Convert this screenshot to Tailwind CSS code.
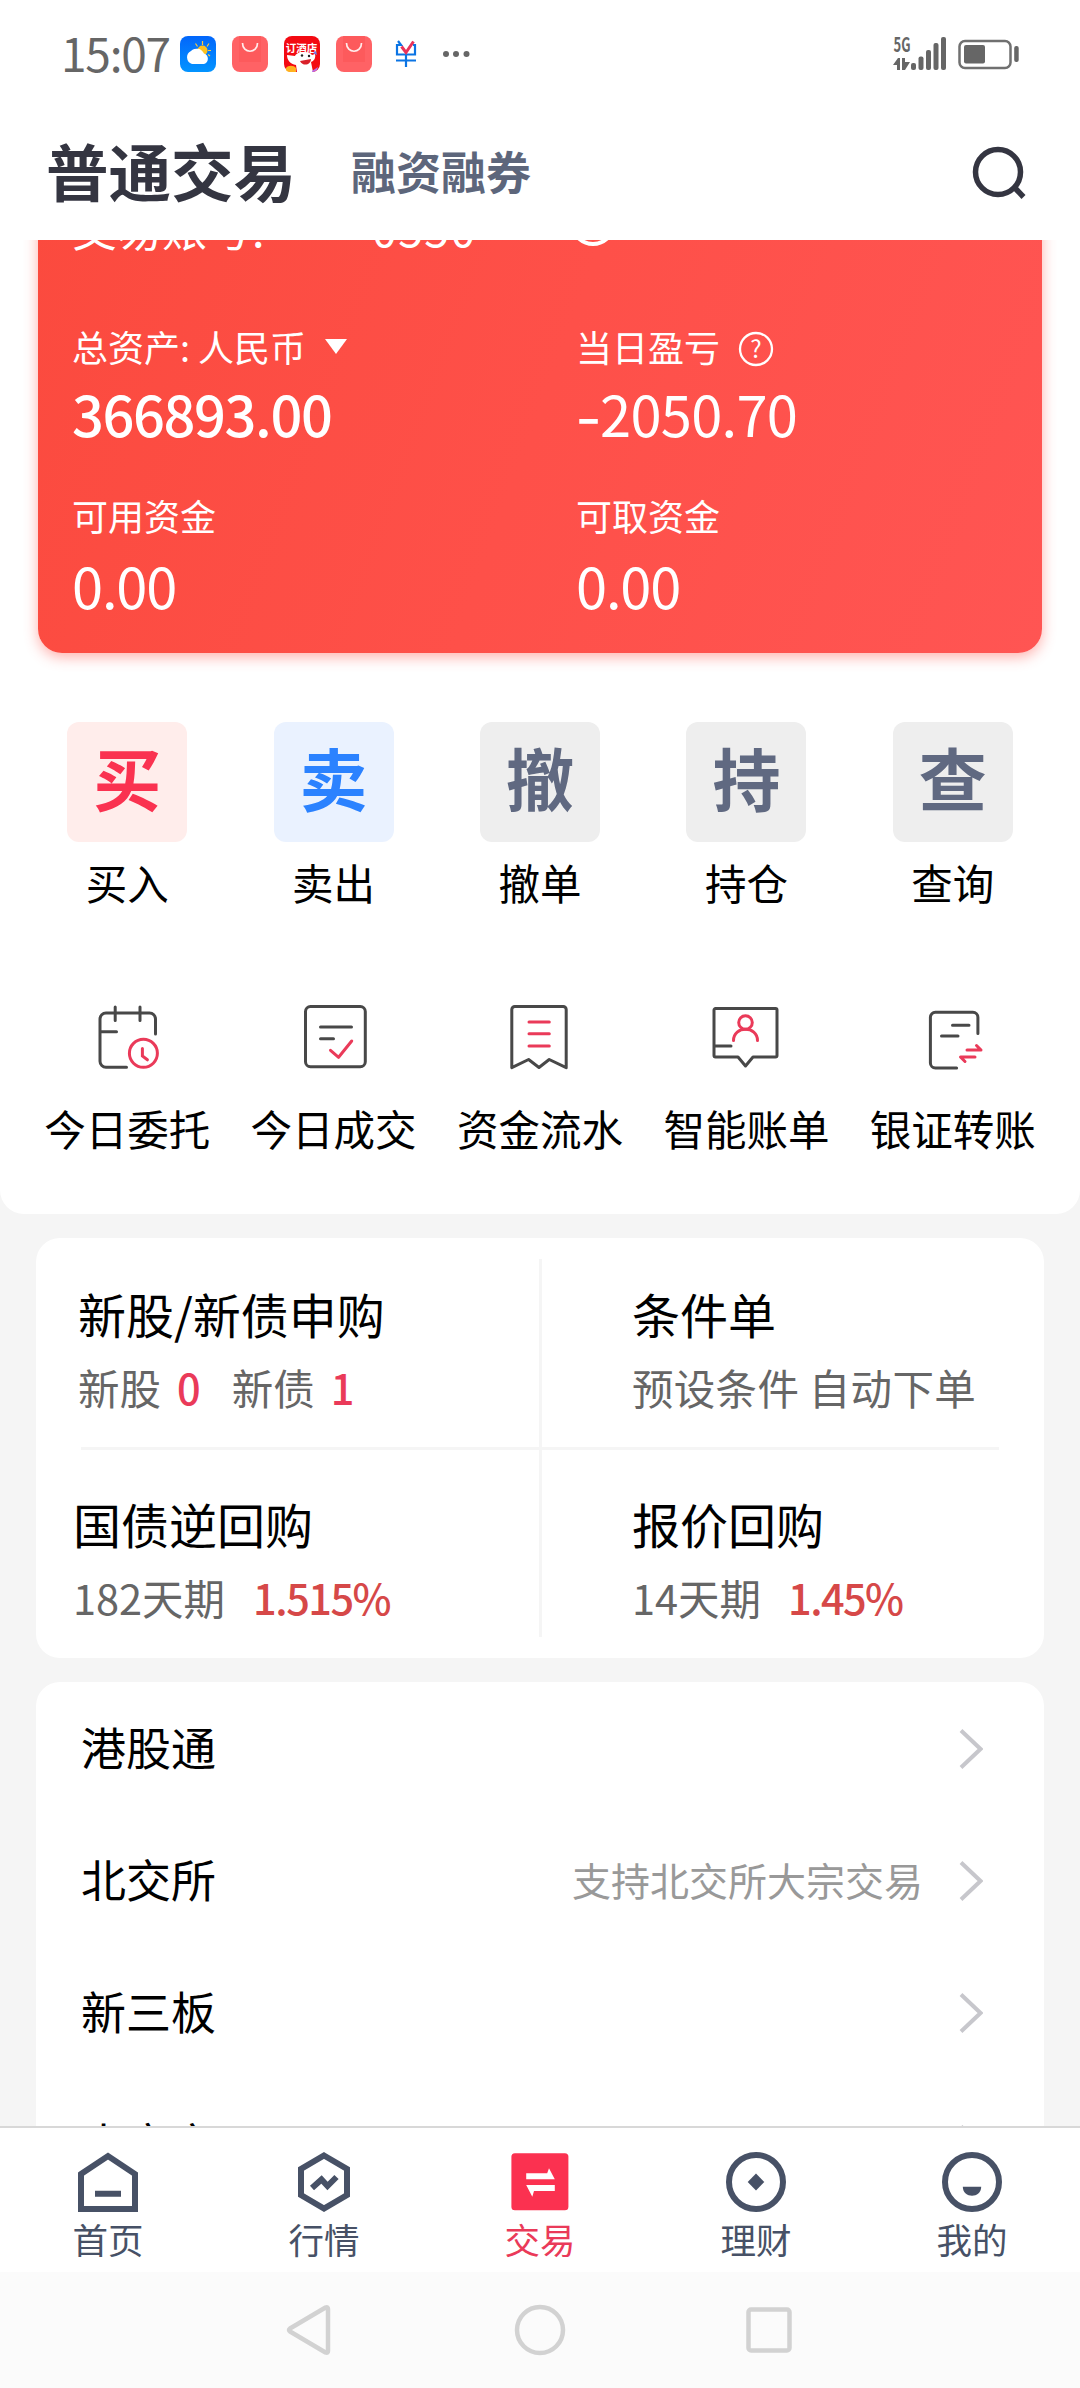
<!DOCTYPE html>
<html lang="zh-CN">
<head>
<meta charset="utf-8">
<title>普通交易</title>
<script src="https://cdn.jsdelivr.net/npm/@tailwindcss/browser@4"></script>
</head>
<body class="bg-white">
<div class="flex h-[2388px] w-[1080px] flex-col overflow-hidden bg-[#f5f5f5] font-['Noto_Sans_CJK_SC',sans-serif] text-black">

  <!-- Status bar -->
  <div class="flex h-[108px] shrink-0 items-center justify-between bg-white pr-[60px] pl-[61px] text-[#666]">
    <div class="flex items-center">
      <span class="w-[119px] text-[46px] leading-[50px] tracking-[-1.2px] -mt-[4px]">15:07</span>
      <div class="flex items-center gap-4">
        <svg class="h-9 w-9" viewBox="0 0 36 36">
          <defs><linearGradient id="sky" x2="0" y2="1"><stop stop-color="#0266fb"/><stop offset="1" stop-color="#0394ff"/></linearGradient></defs>
          <rect width="36" height="36" rx="8" fill="url(#sky)"/>
          <path d="M22.500 5v4M15.500 7.500l2 3M29 7.500l-2 3M31 14.500h-3M30 20l-2-1.500" stroke="#ffc93c" stroke-width="1.200"/>
          <circle cx="22.500" cy="14.500" r="5" fill="#ffc21f"/>
          <path d="M12 28a7 7 0 0 1-1-13 8 8 0 0 1 13 2.500A5.500 5.500 0 0 1 24 28z" fill="#fff"/>
        </svg>
        <svg class="h-9 w-9" viewBox="0 0 36 36"><rect width="36" height="36" rx="8" fill="#ff6265"/><rect x="7" width="22" height="26" fill="#fc5557" opacity=".6"/><path d="M10.500 7c0 11 15 11 15 0" fill="none" stroke="#ffeceb" stroke-width="1.700"/></svg>
        <svg class="h-9 w-9" viewBox="0 0 36 36">
          <rect width="36" height="36" rx="8" fill="#f30a12"/>
          <text x="17.500" y="15.500" text-anchor="middle" font-size="10.500" font-weight="700" fill="#fff">订酒店</text>
          <path d="M3 19l8 1c2-5 15-5 17-1l3-1c1 4-1 7-4 8l2 10H13l-1-7C6 28 3 24 3 19z" fill="#fff"/>
          <circle cx="18" cy="19.500" r="1.200" fill="#222"/><circle cx="25" cy="20" r="1.200" fill="#222"/>
          <path d="M16 25l11-2c0 6-8 8-11 2z" fill="#d9202a"/>
          <path d="M2 34v-2c2-3 8-3 10 0v4H7q-4 0-5-2z" fill="#ffb21f"/><path d="M28 35l6-4-1 3q-2 2-5 2z" fill="#b66df0"/><path d="M29 17l3-2 1 4z" fill="#6b7ff0"/>
        </svg>
        <svg class="h-9 w-9" viewBox="0 0 36 36"><rect width="36" height="36" rx="8" fill="#ff6265"/><rect x="7" width="22" height="26" fill="#fc5557" opacity=".6"/><path d="M10.500 7c0 11 15 11 15 0" fill="none" stroke="#ffeceb" stroke-width="1.700"/></svg>
        <svg class="h-9 w-9" viewBox="0 0 36 36" fill="none" stroke-width="2.200">
          <path d="M10 5l3 4H9v9.500h18V9h-2M8 24.500h20M18 19v12" stroke="#0b74e4"/>
          <path d="M13.500 10.500l4.500 6L25.500 5.500" stroke="#e8325a" stroke-width="3"/>
        </svg>
        <svg class="ml-[2px] h-2 w-7" viewBox="0 0 28 8" fill="#666"><circle cx="4" cy="4" r="3"/><circle cx="14" cy="4" r="3"/><circle cx="24.500" cy="4" r="3"/></svg>
      </div>
    </div>
    <svg class="mr-[1px] h-9 w-[128px]" viewBox="892 36 128 36" fill="#666">
      <text x="894.500" y="52" font-size="20" font-weight="700" textLength="17" lengthAdjust="spacingAndGlyphs">5G</text>
      <path d="M894 65l5-7h2v12h-3v-5zM903 58h3v4h5l-5 8h-3z"/>
      <rect x="912" y="63" width="5" height="7" rx="2"/><rect x="919.500" y="56.500" width="5" height="13.500" rx="2"/><rect x="927" y="50" width="5" height="20" rx="2"/><rect x="934.500" y="43" width="5" height="27" rx="2"/><rect x="942" y="37" width="5" height="33" rx="2"/>
      <rect x="960.500" y="41" width="51" height="27" rx="5.500" fill="none" stroke="#707070" stroke-width="2.500"/>
      <rect x="965" y="45" width="21" height="18.500" rx="2"/><rect x="1015.200" y="46" width="4.500" height="16" rx="2"/>
    </svg>
  </div>

  <!-- Header -->
  <div class="flex h-[132px] shrink-0 items-start bg-white pr-[54px] pl-[46px]">
    <h1 class="pt-[22px] text-[62.500px] leading-[80px] font-bold text-[#343541]">普通交易</h1>
    <span class="pt-[33px] pl-[55px] text-[45px] leading-[60px] font-bold text-[#5d667b]">融资融券</span>
    <svg class="mt-[36px] ml-auto h-14 w-14" viewBox="970 144 56 56" fill="none" stroke="#343541" stroke-width="5.500"><circle cx="998" cy="172" r="22.500"/><path d="M1014 187l9.500 10"/></svg>
  </div>

  <!-- Scrolling content -->
  <div class="flex h-[1886px] shrink-0 flex-col overflow-hidden">
    <section class="h-[974px] shrink-0 rounded-b-3xl bg-white">
      <div class="-mt-[60px] ml-[38px] h-[473px] w-[1004px] rounded-3xl bg-linear-[110deg] from-[#fb4a3e] via-[#fe5049] to-[#ff5553] px-[34px] pt-[18px] text-white shadow-[0_4px_14px_rgba(255,80,70,0.45)]">
        <div class="flex h-[60px] items-center text-[45px] leading-[60px]">
          <span class="w-[300px]">交易账号:</span>
          <span class="w-[128px] tracking-[1.200px]">0550</span>
          <svg class="ml-[73px] h-10 w-10" viewBox="0 0 40 40" fill="none" stroke="#fff" stroke-width="4"><ellipse cx="20" cy="19" rx="19" ry="17"/><circle cx="20" cy="19" r="5"/></svg>
        </div>
        <div class="grid grid-cols-[504px_1fr] pt-[63px]">
          <div class="flex items-center text-[36px] leading-[50px]">总资产: 人民币
            <svg class="ml-[19px] h-4 w-[22px]" viewBox="0 0 22 16" fill="#fff"><path d="M0 1h22L11 16z"/></svg>
          </div>
          <div class="flex items-center text-[36px] leading-[50px]">当日盈亏
            <svg class="mt-[5px] ml-[18px] h-9 w-9" viewBox="0 0 36 36"><circle cx="18" cy="18" r="16" fill="none" stroke="#fff" stroke-width="2.300"/><text x="18" y="26.500" text-anchor="middle" font-size="24" fill="#fff">?</text></svg>
          </div>
          <div class="mt-2 pt-[2px] text-[56px] leading-[64px] font-medium tracking-[-1.4px]">366893.00</div>
          <div class="mt-2 pt-[2px] text-[56px] leading-[64px] tracking-[-0.7px]"><span class="inline-block w-[24px] origin-left scale-x-[1.250] font-medium">-</span>2050.70</div>
          <div class="mt-[45px] text-[36px] leading-[50px]">可用资金</div>
          <div class="mt-[45px] text-[36px] leading-[50px]">可取资金</div>
          <div class="mt-[13px] text-[56px] leading-[64px] tracking-[-1.2px]">0.00</div>
          <div class="mt-[13px] text-[56px] leading-[64px] tracking-[-1.2px]">0.00</div>
        </div>
      </div>

      <div class="mt-[69px] grid grid-cols-5 px-6 text-center text-[41.500px] leading-[60px]">
        <div class="flex flex-col items-center gap-[10px]"><div class="h-[120px] w-[120px] rounded-xl bg-[#ffedeb] text-[68px] leading-[110px] font-bold text-[#fa3250]">买</div>买入</div>
        <div class="flex flex-col items-center gap-[10px]"><div class="h-[120px] w-[120px] rounded-xl bg-[#eaf2ff] text-[68px] leading-[110px] font-bold text-[#2b82ff]">卖</div>卖出</div>
        <div class="flex flex-col items-center gap-[10px]"><div class="h-[120px] w-[120px] rounded-xl bg-[#eeeeee] text-[68px] leading-[110px] font-bold text-[#606981]">撤</div>撤单</div>
        <div class="flex flex-col items-center gap-[10px]"><div class="h-[120px] w-[120px] rounded-xl bg-[#eeeeee] text-[68px] leading-[110px] font-bold text-[#606981]">持</div>持仓</div>
        <div class="flex flex-col items-center gap-[10px]"><div class="h-[120px] w-[120px] rounded-xl bg-[#eeeeee] text-[68px] leading-[110px] font-bold text-[#606981]">查</div>查询</div>
      </div>

      <div class="mt-[90px] grid grid-cols-5 px-6 text-center text-[41.500px] leading-[60px]">
        <div class="flex flex-col items-center gap-6">
          <svg class="h-[72px] w-[72px]" viewBox="0 0 72 72" fill="none" stroke="#484848" stroke-width="3" stroke-linecap="round"><path d="M64.500 32V17a6 6 0 0 0-6-6H15a6 6 0 0 0-6 6v42.300a6 6 0 0 0 6 6h20.500M24.200 5v13.500M49 5v13.500M9 29.700h16.500"/><g stroke="#ea3a59"><circle cx="52.400" cy="51.300" r="14"/><path d="M51.400 46.500v7.500l5 3.800"/></g></svg>今日委托</div>
        <div class="flex flex-col items-center gap-6">
          <svg class="h-[72px] w-[72px]" viewBox="0 0 72 72" fill="none" stroke="#484848" stroke-width="3" stroke-linecap="round" stroke-linejoin="round"><rect x="7.500" y="4.500" width="59.800" height="60.200" rx="5"/><path d="M22.500 25h31M22.500 36.700h13"/><path stroke="#ea3a59" d="M32.500 48.300l8.100 7L53.700 39"/></svg>今日成交</div>
        <div class="flex flex-col items-center gap-6">
          <svg class="h-[72px] w-[72px]" viewBox="0 0 72 72" fill="none" stroke="#484848" stroke-width="3" stroke-linecap="round" stroke-linejoin="round"><path d="M7.800 65.700V7.500a3 3 0 0 1 3-3h48.400a3 3 0 0 1 3 3v58.200l-17-8.200L35 65.500l-10.400-8z"/><path stroke="#ea3a59" d="M25 20h20.300M25 31.700h20.300M25 44h20.300"/></svg>资金流水</div>
        <div class="flex flex-col items-center gap-6">
          <svg class="h-[72px] w-[72px]" viewBox="0 0 72 72" fill="none" stroke="#484848" stroke-width="3" stroke-linecap="round" stroke-linejoin="round"><path d="M5.500 6.500h60a1.500 1.500 0 0 1 1.500 1.500v45.500a1.500 1.500 0 0 1-1.500 1.500H43l-7.500 9-7.500-9H5.500A1.500 1.500 0 0 1 4 53.500V8a1.500 1.500 0 0 1 1.500-1.500zM4 44h17"/><g stroke="#ea3a59"><circle cx="35.500" cy="20.500" r="6.800"/><path d="M23.500 38.500c0-15 24-15 24 0"/></g></svg>智能账单</div>
        <div class="flex flex-col items-center gap-6">
          <svg class="h-[72px] w-[72px]" viewBox="0 0 72 72" fill="none" stroke="#484848" stroke-width="3" stroke-linecap="round" stroke-linejoin="round"><path d="M60.900 31.500V15.300a5 5 0 0 0-5-5H18.400a5 5 0 0 0-5 5V61a5 5 0 0 0 5 5h21.200M35.500 23.300h16.500M24.500 34h16.500"/><path stroke="#ea3a59" d="M50 48h14l-4.500-4.500M58 55H43.500l4.500 4.500"/></svg>银证转账</div>
      </div>
    </section>

    <!-- Subscription / repo card -->
    <section class="mx-9 mt-6 h-[420px] shrink-0 rounded-3xl bg-white pt-[21px]">
      <div class="relative grid h-[378px] grid-cols-[503px_1fr] grid-rows-[188px_190px]">
        <div class="pt-[24px] pl-[42px]">
          <div class="text-[48px] leading-[60px]">新股/新债申购</div>
          <div class="mt-[14px] flex text-[41.500px] leading-[60px] text-[#666]">新股<span class="ml-[16px] font-medium text-[#ea3a59]">0</span><span class="ml-[31px]">新债</span><span class="ml-[16px] font-medium text-[#ea3a59]">1</span></div>
        </div>
        <div class="pt-[24px] pl-[93px]">
          <div class="text-[48px] leading-[60px]">条件单</div>
          <div class="mt-[14px] text-[41.500px] leading-[60px] tracking-[0.300px] text-[#666]">预设条件 自动下单</div>
        </div>
        <div class="pt-[46px] pl-[37px]">
          <div class="text-[48px] leading-[60px]">国债逆回购</div>
          <div class="mt-[14px] flex text-[41.500px] leading-[60px] text-[#666]">182天期<span class="ml-[28px] font-medium tracking-[-1.500px] text-[#d64848]">1.515%</span></div>
        </div>
        <div class="pt-[46px] pl-[93px]">
          <div class="text-[48px] leading-[60px]">报价回购</div>
          <div class="mt-[14px] flex text-[41.500px] leading-[60px] text-[#666]">14天期<span class="ml-[27px] font-medium tracking-[-1.600px] text-[#d64848]">1.45%</span></div>
        </div>
        <div class="absolute inset-y-0 left-[503px] w-[3px] bg-[#f5f5f5]"></div>
        <div class="absolute top-[188px] right-[45px] left-[45px] h-[3px] bg-[#f5f5f5]"></div>
      </div>
    </section>

    <!-- Market list -->
    <section class="mx-9 mt-6 shrink-0 rounded-t-3xl bg-white pr-[61px] pl-[45px] text-[45px]">
      <div class="flex h-[132px] items-center"><span class="-mt-[3px]">港股通</span><svg class="mt-[2px] ml-auto h-10 w-6" viewBox="0 0 24 40" fill="none" stroke="#c7c7cc" stroke-width="4"><path d="M2 1.500L21.500 20 2 38.500"/></svg></div>
      <div class="flex h-[132px] items-center"><span class="-mt-[3px]">北交所</span><span class="-mt-[2px] ml-auto pr-[36px] text-[39px] text-[#999]">支持北交所大宗交易</span><svg class="mt-[2px] h-10 w-6" viewBox="0 0 24 40" fill="none" stroke="#c7c7cc" stroke-width="4"><path d="M2 1.500L21.500 20 2 38.500"/></svg></div>
      <div class="flex h-[132px] items-center"><span class="-mt-[3px]">新三板</span><svg class="mt-[2px] ml-auto h-10 w-6" viewBox="0 0 24 40" fill="none" stroke="#c7c7cc" stroke-width="4"><path d="M2 1.500L21.500 20 2 38.500"/></svg></div>
      <div class="flex h-[132px] items-center"><span class="-mt-[2px]">大宗交</span><svg class="mt-[2px] ml-auto h-10 w-6" viewBox="0 0 24 40" fill="none" stroke="#c7c7cc" stroke-width="4"><path d="M2 1.500L21.500 20 2 38.500"/></svg></div>
    </section>
  </div>

  <!-- Tab bar -->
  <nav class="grid h-[146px] shrink-0 grid-cols-5 border-t-2 border-[#d8d8d8] bg-white pt-6 text-[35.500px] leading-[50px] text-[#475166]">
    <div class="flex flex-col items-center gap-[2px]"><svg class="h-[60px] w-[60px]" viewBox="0 0 60 60" fill="none" stroke="#475166" stroke-width="6"><path d="M3 22L30 4l27 18v35H3zM17 41.700h26"/></svg>首页</div>
    <div class="flex flex-col items-center gap-[2px]"><svg class="h-[60px] w-[60px]" viewBox="0 0 60 60" fill="none" stroke="#475166" stroke-width="6"><path d="M30 3.500l23 13.500v26L30 56.500 7 43V17zM18 36l9.500-8.500 6 6.500 9-9"/></svg>行情</div>
    <div class="flex flex-col items-center gap-[2px] text-[#ea3a59]"><svg class="h-[60px] w-[60px]" viewBox="0 0 60 60"><rect x="1.400" y="1.300" width="57" height="57" rx="3.500" fill="#fb3150"/><path fill="#fff" d="M16.200 21.300h21L39 16.300l5.800 11H16.200zM16.200 33h28.600v6H24l-1.700 5.700z"/></svg>交易</div>
    <div class="flex flex-col items-center gap-[2px]"><svg class="h-[60px] w-[60px]" viewBox="0 0 60 60"><circle cx="30" cy="30" r="27" fill="none" stroke="#475166" stroke-width="6"/><path fill="#475166" d="M30 21.500l8.300 8.500-8.300 8.500-8.300-8.500z"/></svg>理财</div>
    <div class="flex flex-col items-center gap-[2px]"><svg class="h-[60px] w-[60px]" viewBox="0 0 60 60"><circle cx="30" cy="30" r="27" fill="none" stroke="#475166" stroke-width="6"/><path fill="#475166" d="M20.800 34.700h18.400c0 12-18.400 12-18.400 0z"/></svg>我的</div>
  </nav>

  <!-- System navigation -->
  <div class="flex h-[116px] flex-1 items-center justify-center gap-[180px] bg-[#fbfbfb]">
    <svg class="h-[52px] w-[50px]" viewBox="0 0 50 52" fill="none" stroke="#d2d2d2" stroke-width="4.500" stroke-linejoin="round"><path d="M6 24.500L41.500 3.500q2.500-1 2.500 1.500v42q0 2.500-2.500 1.500L6 27.500q-2-1.500 0-3z"/></svg>
    <svg class="h-[52px] w-[52px]" viewBox="0 0 52 52" fill="none" stroke="#d2d2d2" stroke-width="4.500"><circle cx="26" cy="26" r="23"/></svg>
    <svg class="h-[52px] w-[50px]" viewBox="0 0 50 52" fill="none" stroke="#d2d2d2" stroke-width="4.500"><rect x="2.500" y="5.500" width="41" height="41" rx="2.500"/></svg>
  </div>
</div>
</body>
</html>
